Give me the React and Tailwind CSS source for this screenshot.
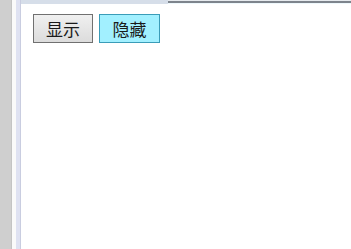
import React, { useState } from "react";

const App = () => {
  const [shown, setShown] = useState(false);

  return (
    <div className="flex h-[249px] w-[351px] overflow-hidden bg-white font-['Noto_Sans_CJK_SC',sans-serif]">
      {/* window frame on the left */}
      <div className="w-[11px] shrink-0 bg-[#cfcfcf]" />
      <div className="w-px shrink-0 bg-[#c4c4c4]" />
      <div className="w-[4px] shrink-0 bg-[#fafafa]" />
      <div className="w-[4px] shrink-0 bg-[#dfe2f2]" />
      <div className="w-px shrink-0 bg-[#c9cde0]" />

      <div className="flex flex-1 flex-col">
        {/* top strip */}
        <div className="flex h-[4px]">
          <div className="w-[147px] bg-[#d6dee9]" />
          <div className="flex flex-1 flex-col">
            <div className="h-px bg-[#e6eaee]" />
            <div className="h-[2px] bg-[#7d848c]" />
            <div className="h-px bg-[#eef8fc]" />
          </div>
        </div>

        <div className="flex gap-[6px] pl-[12px] pt-[10px]">
          <button
            onClick={() => setShown(true)}
            className="flex h-[29px] w-[60px] items-center justify-center border border-[#707070] bg-gradient-to-b from-[#f0f0f0] to-[#dcdcdc] text-[17px] leading-none text-[#1a1a1a]"
          >
            显示
          </button>
          <button
            onClick={() => setShown(false)}
            className="flex h-[29px] w-[61px] items-center justify-center border border-[#3a9cb8] bg-[#a2f0ff] text-[17px] leading-none text-[#1a1a1a]"
          >
            隐藏
          </button>
        </div>
        {shown && null}
      </div>
    </div>
  );
};

export default App;
